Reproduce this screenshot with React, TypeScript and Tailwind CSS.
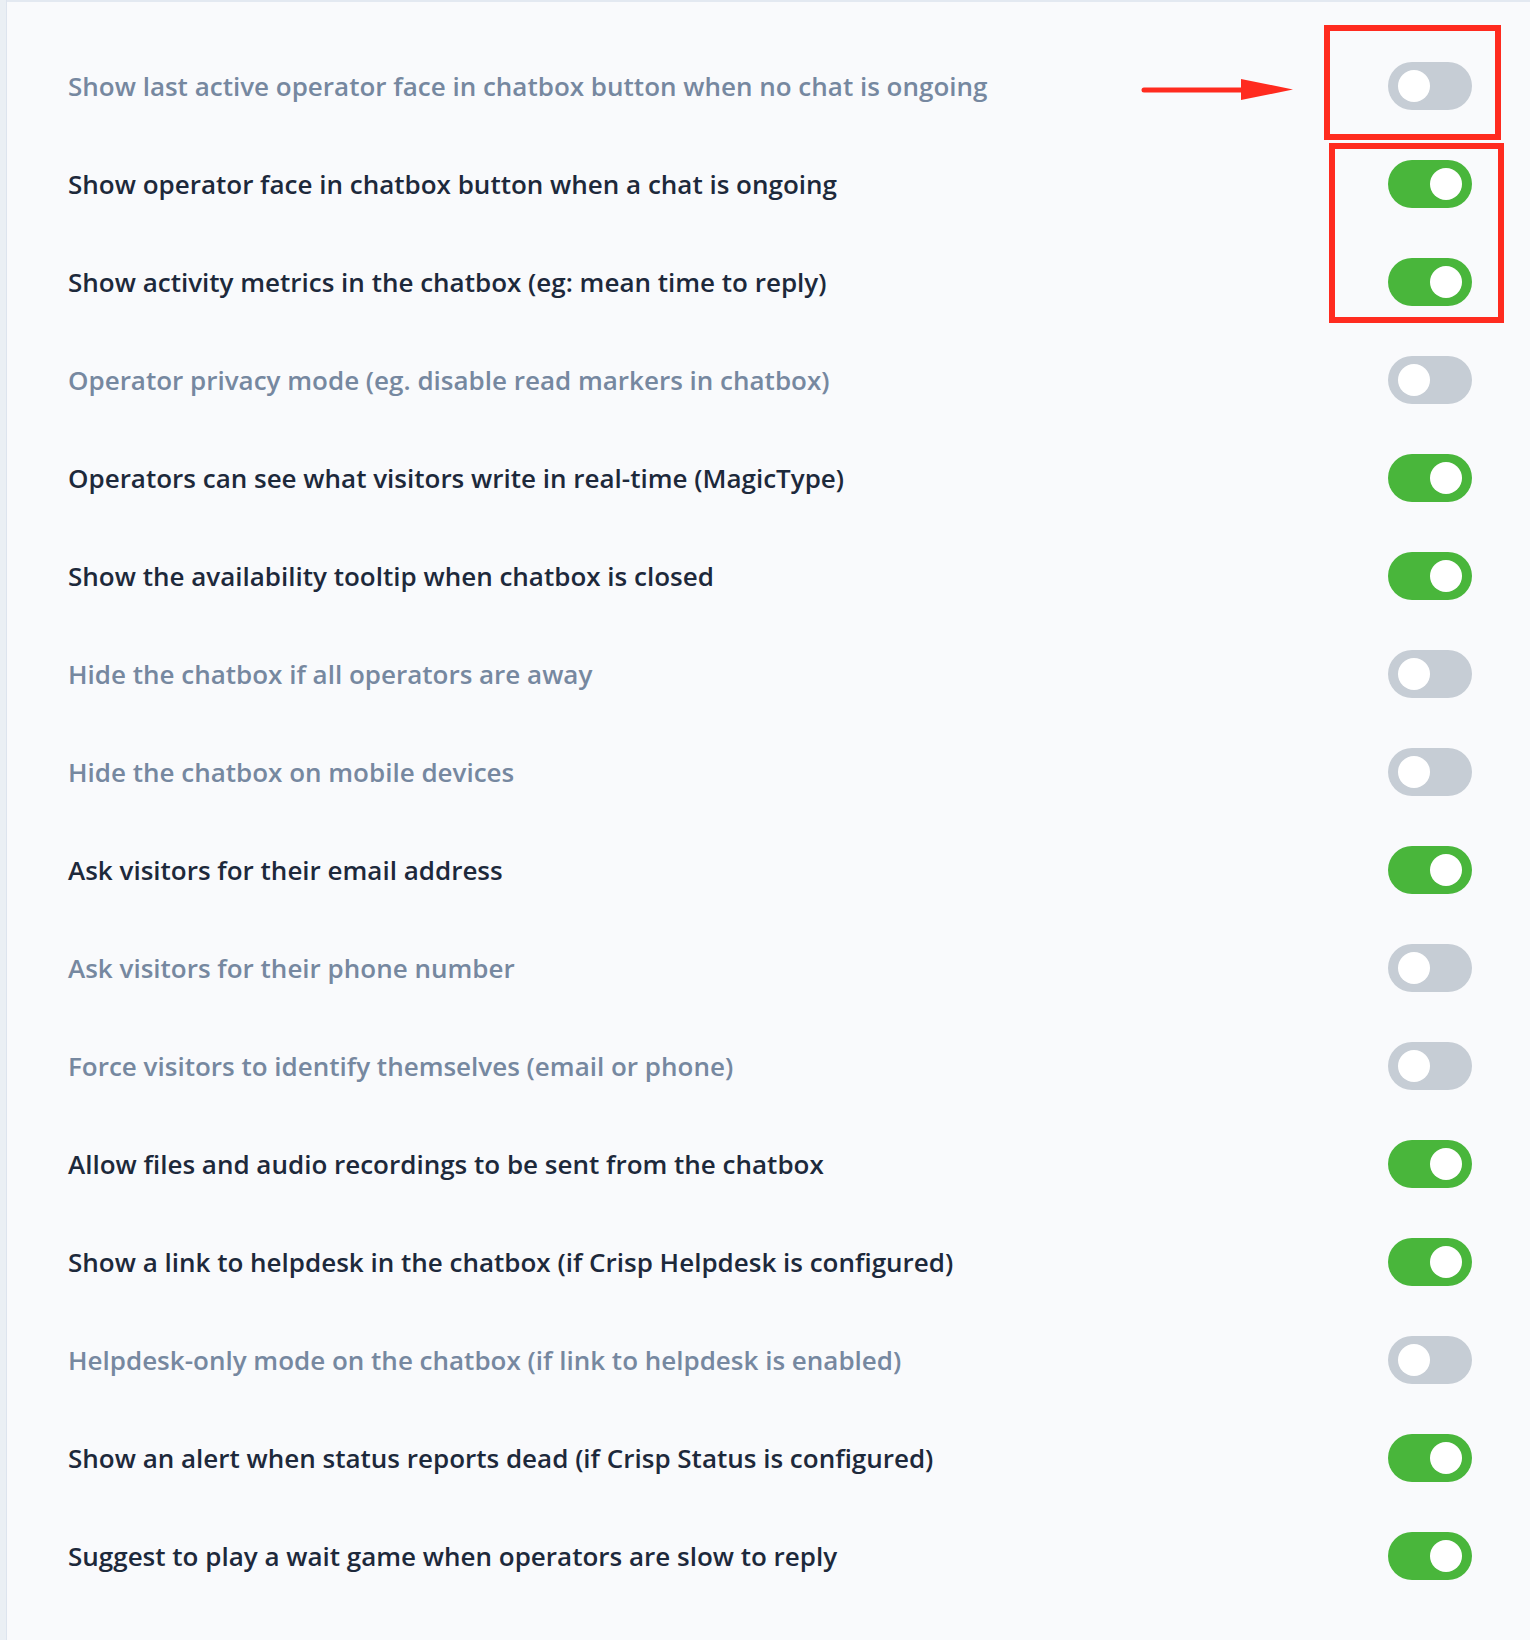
import React from "react";

const rows: [string, boolean][] = [
  ["Show last active operator face in chatbox button when no chat is ongoing", false],
  ["Show operator face in chatbox button when a chat is ongoing", true],
  ["Show activity metrics in the chatbox (eg: mean time to reply)", true],
  ["Operator privacy mode (eg. disable read markers in chatbox)", false],
  ["Operators can see what visitors write in real-time (MagicType)", true],
  ["Show the availability tooltip when chatbox is closed", true],
  ["Hide the chatbox if all operators are away", false],
  ["Hide the chatbox on mobile devices", false],
  ["Ask visitors for their email address", true],
  ["Ask visitors for their phone number", false],
  ["Force visitors to identify themselves (email or phone)", false],
  ["Allow files and audio recordings to be sent from the chatbox", true],
  ["Show a link to helpdesk in the chatbox (if Crisp Helpdesk is configured)", true],
  ["Helpdesk-only mode on the chatbox (if link to helpdesk is enabled)", false],
  ["Show an alert when status reports dead (if Crisp Status is configured)", true],
  ["Suggest to play a wait game when operators are slow to reply", true],
];

function Toggle({ on }: { on: boolean }) {
  return (
    <div
      className={
        "flex h-[48px] w-[84px] shrink-0 items-center rounded-full px-[10px] " +
        (on ? "justify-end bg-[#49b63b]" : "justify-start bg-[#c6cdd5]")
      }
    >
      <div className="h-[32px] w-[32px] rounded-full bg-white" />
    </div>
  );
}

export default function App() {
  return (
    <div className="relative flex h-[1640px] w-[1530px] overflow-hidden bg-[#f9fafc] font-['Open_Sans',sans-serif]">
      <div className="w-[7px] shrink-0 border-r border-[#dde4ee] bg-[#eaeff4]" />
      <div className="flex-1 border-t-2 border-[#e3e9f1] pt-[35px] pl-[61px] pr-[58px]">
        {rows.map(([label, on], i) => (
          <div key={i} className="flex h-[98px] items-center justify-between">
            <span
              className={
                "text-[26px] font-semibold " +
                (on ? "text-[#1d293b]" : "text-[#7688a0]")
              }
            >
              {label}
            </span>
            <Toggle on={on} />
          </div>
        ))}
      </div>
      {/* annotations */}
      <div className="absolute left-[1324px] top-[25px] h-[115px] w-[177px] border-[6px] border-[#ff2b1f]" />
      <div className="absolute left-[1329px] top-[143px] h-[180px] w-[175px] border-[6px] border-[#ff2b1f]" />
      <svg className="absolute left-[1140px] top-[76px]" width="160" height="28" viewBox="0 0 160 28">
        <line x1="4" y1="14" x2="104" y2="14" stroke="#ff2b1f" strokeWidth="5" strokeLinecap="round" />
        <polygon points="101,3 153,13.5 101,24" fill="#ff2b1f" />
      </svg>
    </div>
  );
}
